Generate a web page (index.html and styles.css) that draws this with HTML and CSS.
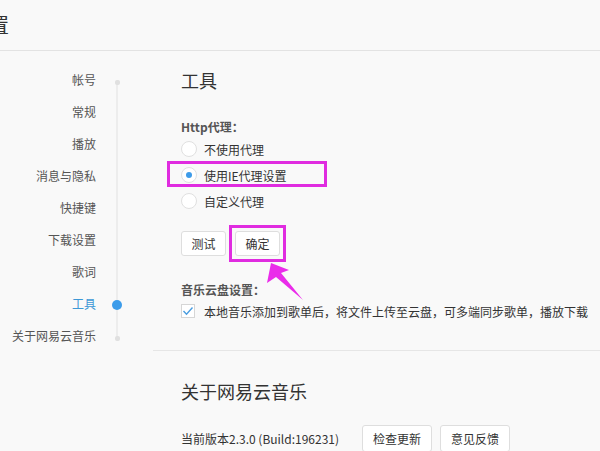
FILE: index.html
```html
<!DOCTYPE html>
<html lang="zh-CN">
<head>
<meta charset="utf-8">
<title>设置</title>
<link rel="stylesheet" href="styles.css">
</head>
<body>
<header class="topbar"><h1 class="title">设置</h1></header>
<div class="main">
  <nav class="nav">
    <ul class="nav-list">
      <li class="nav-item"><span class="nav-label">帐号</span><span class="nav-marker"><i class="dot-end"></i></span></li>
      <li class="nav-item"><span class="nav-label">常规</span><span class="nav-marker"></span></li>
      <li class="nav-item"><span class="nav-label">播放</span><span class="nav-marker"></span></li>
      <li class="nav-item"><span class="nav-label">消息与隐私</span><span class="nav-marker"></span></li>
      <li class="nav-item"><span class="nav-label">快捷键</span><span class="nav-marker"></span></li>
      <li class="nav-item"><span class="nav-label">下载设置</span><span class="nav-marker"></span></li>
      <li class="nav-item"><span class="nav-label">歌词</span><span class="nav-marker"></span></li>
      <li class="nav-item active"><span class="nav-label">工具</span><span class="nav-marker"><i class="dot-active"></i></span></li>
      <li class="nav-item"><span class="nav-label">关于网易云音乐</span><span class="nav-marker"><i class="dot-end"></i></span></li>
    </ul>
  </nav>
  <div class="content">
    <section class="section tools">
      <h2 class="sec-title">工具</h2>
      <div class="label">Http代理：</div>
      <div class="radio-row"><span class="radio"></span><span>不使用代理</span></div>
      <div class="radio-row marked"><span class="radio checked"></span><span>使用IE代理设置</span><span class="mark mark-row"></span></div>
      <div class="radio-row"><span class="radio"></span><span>自定义代理</span></div>
      <div class="btn-row">
        <button class="btn">测试</button>
        <span class="btn-wrap"><button class="btn">确定</button><span class="mark mark-btn"></span></span>
        <svg class="arrow" width="46" height="42" viewBox="0 0 46 42"><polygon points="9,2 5,22 14,16 41,39 19,12 27,9" fill="#ea2cea"/></svg>
      </div>
      <div class="label label-cloud">音乐云盘设置：</div>
      <div class="check-row">
        <span class="checkbox"><svg width="12" height="12" viewBox="0 0 12 12"><polyline points="1.5,6 4.5,9.2 10.5,2.5" fill="none" stroke="#4a9de0" stroke-width="1.4"/></svg></span>
        <span>本地音乐添加到歌单后，将文件上传至云盘，可多端同步歌单，播放下载</span>
      </div>
    </section>
    <section class="section about">
      <h2 class="sec-title">关于网易云音乐</h2>
      <div class="version-row">
        <span class="version">当前版本2.3.0 (Build:196231)</span>
        <button class="btn btn-lg">检查更新</button>
        <button class="btn btn-lg">意见反馈</button>
      </div>
    </section>
  </div>
</div>
</body>
</html>
```

FILE: styles.css
```css
html, body {
  margin: 0;
  padding: 0;
}
body {
  background: #f9f9f9;
  font-family: "Microsoft YaHei", "Noto Sans CJK SC", "Liberation Sans", sans-serif;
  font-size: 12px;
  color: #333;
  width: 600px;
  height: 451px;
  overflow: hidden;
}
.topbar {
  height: 50px;
  border-bottom: 1px solid #e3e3e3;
  overflow: hidden;
}
.title {
  margin: 0 0 0 -31px;
  font-size: 20px;
  font-weight: normal;
  line-height: 50px;
  color: #333;
  white-space: nowrap;
}
.main {
  display: flex;
}
.nav {
  width: 153px;
  flex: none;
  padding-top: 13px;
}
.nav-list {
  list-style: none;
  margin: 0;
  padding: 0;
  position: relative;
}
.nav-list::before {
  content: "";
  position: absolute;
  left: 116px;
  top: 18px;
  bottom: 14px;
  width: 2px;
  background: #ededed;
}
.nav-item {
  display: flex;
  align-items: center;
  height: 32px;
}
.nav-label {
  width: 96px;
  text-align: right;
  color: #555;
  white-space: nowrap;
  line-height: 32px;
}
.nav-item.active .nav-label {
  color: #3d98d6;
}
.nav-marker {
  width: 42px;
  display: flex;
  justify-content: center;
  align-items: center;
  position: relative;
  z-index: 1;
}
.dot-end {
  display: block;
  width: 5px;
  height: 5px;
  border-radius: 2px;
  background: #e0e0e0;
  margin-top: 4px;
}
.dot-active {
  display: block;
  width: 10px;
  height: 10px;
  border-radius: 50%;
  background: #3c9cea;
  margin-top: 1px;
}
.content {
  flex: 1;
}
.section {
  padding-left: 28px;
}
.tools {
  padding-top: 17px;
  padding-bottom: 27px;
  border-bottom: 1px solid #e6e6e6;
}
.sec-title {
  margin: 0;
  font-size: 18px;
  font-weight: normal;
  line-height: 24px;
  color: #333;
}
.label {
  margin-top: 26px;
  font-weight: bold;
  color: #555;
  line-height: 18px;
}
.label-cloud {
  margin-top: 25px;
}
.radio-row {
  display: flex;
  align-items: center;
  height: 26px;
  gap: 7px;
  position: relative;
}
.radio {
  width: 16px;
  height: 16px;
  box-sizing: border-box;
  border: 1px solid #e0e0e0;
  border-radius: 50%;
  background: #fff;
  display: flex;
  align-items: center;
  justify-content: center;
}
.radio.checked::after {
  content: "";
  width: 6px;
  height: 6px;
  border-radius: 50%;
  background: #3d9be9;
}
.mark {
  position: absolute;
  box-sizing: border-box;
  border: 3px solid #e02ce0;
  pointer-events: none;
}
.mark-row {
  left: -14px;
  top: -1px;
  width: 160px;
  height: 26px;
}
.btn-row {
  display: flex;
  gap: 9px;
  margin-top: 17px;
  position: relative;
}
.btn {
  height: 25px;
  padding: 0 9.5px;
  border: 1px solid #dedede;
  border-radius: 3px;
  background: #fff;
  font: inherit;
  color: #333;
  line-height: 23px;
}
.btn-wrap {
  position: relative;
  display: flex;
}
.mark-btn {
  inset: -6px;
}
.arrow {
  position: absolute;
  left: 81px;
  top: 30px;
}
.check-row {
  display: flex;
  align-items: center;
  height: 24px;
  gap: 9px;
}
.checkbox {
  width: 14px;
  height: 14px;
  box-sizing: border-box;
  border: 1px solid #d6d6d6;
  background: #fff;
  display: flex;
  align-items: center;
  justify-content: center;
}
.about {
  padding-top: 28px;
}
.version-row {
  display: flex;
  align-items: center;
  margin-top: 22px;
  gap: 8px;
}
.version {
  margin-right: 15px;
  white-space: nowrap;
}
.btn-lg {
  height: 27px;
  padding: 0 10px;
}
```
